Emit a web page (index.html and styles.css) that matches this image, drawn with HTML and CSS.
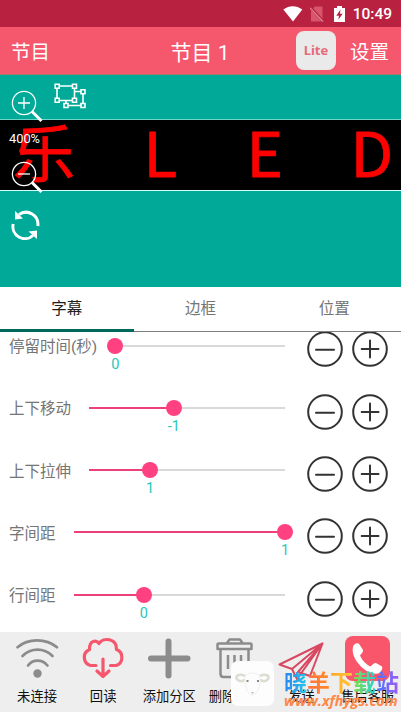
FILE: index.html
```html
<!DOCTYPE html>
<html lang="zh-CN">
<head>
<meta charset="utf-8">
<meta name="viewport" content="width=device-width">
<title>节目 1</title>
<link rel="stylesheet" href="styles.css">
</head>
<body>
<svg class="defs" width="0" height="0">
  <symbol id="minus" viewBox="0 0 36 36"><circle cx="18" cy="18" r="16.8"/><path d="M9 18.8H27"/></symbol>
  <symbol id="plus" viewBox="0 0 36 36"><circle cx="18" cy="18" r="16.8"/><path d="M9.700 18H26.500M18 9.600V26.400"/></symbol>
</svg>
<div class="app">
  <div class="status">
    <svg width="20" height="16" viewBox="0 0 20 16"><path fill="#fff" d="M0.300 3.500C6-1 13.500-1 19.300 3.500L10 15.500Z"/></svg>
    <svg class="sim" width="14" height="16" viewBox="0 0 14 16"><path fill="#d8566b" d="M5 .5H12.500V15.500H1V4.500Z"/><path stroke="#b92141" stroke-width="2.600" d="M0 1L14 16"/><path stroke="#df8492" stroke-width="1.200" d="M0 2L13 15.500"/></svg>
    <svg class="batt" width="11" height="16" viewBox="0 0 11 16"><path fill="#fff" d="M0 2H3V0H8V2H11V16H0Z"/><path fill="#b92141" d="M6.500 3.500L2.300 9.700H5L4.300 13.800L8.700 7.700H6Z"/></svg>
    <span>10:49</span>
  </div>
  <header class="bar">
    <span class="back">节目</span>
    <h1>节目 1</h1>
    <span class="lite">Lite</span>
    <span class="settings">设置</span>
  </header>
  <section class="canvas">
    <div class="led"><span>乐</span><span>L</span><span>E</span><span>D</span></div>
    <div class="tools">
      <svg class="mag" width="32" height="34" viewBox="0 0 32 34"><circle cx="13" cy="13" r="11.600"/><path d="M7 13H19M13 7V19"/><path class="handle" d="M21 21.500L30.500 31"/></svg>
      <span class="pct">400%</span>
      <svg class="mag out" width="32" height="34" viewBox="0 0 32 34"><circle cx="13" cy="13" r="11.600"/><path d="M7 13H19"/><path class="handle" d="M21 21.500L30.500 31"/></svg>
      <svg class="sync" width="30" height="30" viewBox="0 0 30 30"><path d="M8 4.500A12 12 0 0 1 26.800 16M22 25.500A12 12 0 0 1 2.200 14"/><path class="tip" d="M4 1L4 9.500L12 8.500ZM26 29L26 20.500L17.500 21.500Z"/></svg>
    </div>
    <svg class="group" width="34" height="28" viewBox="0 0 34 28"><path d="M3 3H20.500V17.500H3ZM20.500 8.500H29V22.500H12V17.500"/><path class="knob" d="M1.200 1.200h4v4h-4zM18.500 1.200h4v4h-4zM1.200 15.200h4v4h-4zM18.500 15.200h4v4h-4zM27 6.700h4v4h-4zM27 20.500h4v4h-4zM10 20.500h4v4h-4z"/></svg>
  </section>
  <nav class="tabs"><span class="on">字幕</span><span>边框</span><span>位置</span></nav>
  <main class="rows">
    <div class="row"><label>停留时间(秒)</label><div class="slider"><i class="fill" style="width:0%"></i><i class="thumb" style="left:0%"></i><b style="left:0%">0</b></div><svg><use href="#minus"/></svg><svg><use href="#plus"/></svg></div>
    <div class="row"><label>上下移动</label><div class="slider"><i class="fill" style="width:43.300%"></i><i class="thumb" style="left:43.300%"></i><b style="left:43.300%">-1</b></div><svg><use href="#minus"/></svg><svg><use href="#plus"/></svg></div>
    <div class="row"><label>上下拉伸</label><div class="slider"><i class="fill" style="width:31.100%"></i><i class="thumb" style="left:31.100%"></i><b style="left:31.100%">1</b></div><svg><use href="#minus"/></svg><svg><use href="#plus"/></svg></div>
    <div class="row"><label>字间距</label><div class="slider"><i class="fill" style="width:100%"></i><i class="thumb" style="left:100%"></i><b style="left:100%">1</b></div><svg><use href="#minus"/></svg><svg><use href="#plus"/></svg></div>
    <div class="row"><label>行间距</label><div class="slider"><i class="fill" style="width:33.300%"></i><i class="thumb" style="left:33.300%"></i><b style="left:33.300%">0</b></div><svg><use href="#minus"/></svg><svg><use href="#plus"/></svg></div>
  </main>
  <footer class="dock">
    <div class="item"><svg width="46" height="46" viewBox="0 0 46 46" fill="none" stroke="#8c8c8c" stroke-width="2.700" stroke-linecap="round"><path d="M3.500 12.200C14 3 32 3 43 12.200M8.500 21C17 12.500 30 12.500 38.500 21M14 30.500C19 24 28 24 33.500 30.500"/><circle cx="23.500" cy="38.500" r="4.200" fill="#8c8c8c" stroke="none"/></svg><span>未连接</span></div>
    <div class="item"><svg width="46" height="46" viewBox="0 0 46 46" fill="none" stroke="#f5576c" stroke-width="3.200" stroke-linecap="round" stroke-linejoin="round"><path d="M16 30.500H10.500A8.500 8.500 0 0 1 9.500 14.500C9 5 17 4.500 19 8.500C23 2 37 3 36.500 14.500A8.500 8.500 0 0 1 36 30.500H30.500M23 24V41M17 36L23 41.500L29 36"/></svg><span>回读</span></div>
    <div class="item"><svg width="46" height="46" viewBox="0 0 46 46" fill="none" stroke="#8c8c8c" stroke-width="6" stroke-linecap="round"><path d="M5 23.500H41.500M22.500 6.500V40.500"/></svg><span>添加分区</span></div>
    <div class="item"><svg width="46" height="46" viewBox="0 0 46 46" fill="none" stroke="#8c8c8c" stroke-width="2.500" stroke-linejoin="round"><path d="M5.500 14V9.500Q5.500 8.500 7 8.500H38Q39.500 8.500 39.500 9.500V14ZM15 8L17.500 4.500H28L30.500 8M8.500 14V39Q8.500 42 11.500 42H33.500Q36.500 42 36.500 39V14M16 20V34M22.500 20V37M29 20V34"/></svg><span>删除分区</span></div>
    <div class="item"><svg width="46" height="46" viewBox="0 0 46 46" fill="none" stroke="#d94860" stroke-width="2" stroke-linejoin="round"><path d="M44.500 8.500L1.500 29.500L14 34L44.500 8.500L32 41L20 37ZM14 34L19 44L44.500 8.500"/></svg><span>发送</span></div>
    <div class="item"><svg width="46" height="46" viewBox="0 0 46 46"><rect x="0" y="1" width="45" height="45" rx="8" fill="#f9566b"/><path fill="#fff" d="M8 12C9 8 13 7.500 14.500 9.500L18 15C18.500 17 16 19 15 20.500C17 25 21 29.500 25.500 31.500C27 30.500 28.500 27.500 31 28L37 31.500C38 33 36 38 33 38.500C22 41 5 24 8 12Z"/></svg><span>售后客服</span></div>
  </footer>
  <div class="goat"><svg width="43" height="45" viewBox="0 0 43 45" fill="none"><path stroke="#dcdcd0" stroke-width="2.600" d="M14 15C8 12 4 15 6 18C8 21 13 21 13 18M29 15C35 12 39 15 37 18C35 21 30 21 30 18"/><path stroke="#efefec" d="M14 15C18 11 25 11 29 15C30 24 27 33 21.500 34C16 33 13 24 14 15Z"/><path fill="#888" d="M15.500 19h2v2h-2zM26 19h2v2h-2z"/><path fill="#bbb" d="M20 31h3l-1.500 2z"/></svg></div>
  <div class="mark"><div class="name"><span>晓</span><span>羊</span><span>下</span><span>载</span><span>站</span></div><div class="url">www.xfhygs.com</div></div>
</div>
</body>
</html>
```
FILE: styles.css
```css
* { box-sizing: border-box; }
body { margin: 0; font-family: Roboto, "Noto Sans CJK SC", sans-serif; }
.defs { position: absolute; }
.app { position: relative; width: 401px; height: 712px; overflow: hidden; background: #fff; display: flex; flex-direction: column; }
.status { height: 27px; background: #b92141; color: #fff; display: flex; align-items: center; justify-content: flex-end; padding: 1px 9px 0 0; font-size: 15.500px; font-weight: 500; }
.status svg { margin-right: 7px; }
.status .batt { margin: 0 8px 0 3px; }
.status .sim { margin-right: 7px; }
.bar { height: 48px; background: #f5576c; color: #fff; display: grid; grid-template-columns: 100px 1fr 40px 65px; align-items: center; font-size: 19.500px; border-bottom: 1px solid #a9786f; }
.back { padding-left: 11px; }
.bar h1 { margin: 0; font-size: 21px; font-weight: 400; text-align: center; padding-left: 4px; }
.lite { width: 40px; height: 39px; border-radius: 8px; background: #eaeaea; color: #e56b7c; font: 700 13px/38px "Noto Sans", sans-serif; text-align: center; }
.settings { padding-left: 14px; white-space: nowrap; }
.canvas { position: relative; height: 212px; background: #00a998; padding-top: 44px; }
.led { height: 72px; background: #000; border-top: 1px solid #6ed5ca; border-bottom: 1px solid #d5fffa; display: grid; grid-template-columns: 143.500px 103px 104px 50px; font: 400 62px/64px "Noto Sans CJK SC", sans-serif; color: #f00; -webkit-text-stroke: 0.800px #f00; }
.led span { margin-top: -2px; }
.led span:first-child { padding-left: 13px; }
.tools { position: absolute; left: 10px; top: 15px; display: flex; flex-direction: column; width: 40px; }
.mag { fill: none; stroke: #fff; stroke-width: 1.300; margin-left: 1px; }
.mag .handle { stroke-width: 3; }
.pct { color: #fff; font-size: 12.800px; line-height: 16px; margin: 7px 0 14px -1px; }
.sync { margin: 15px 0 0 1px; fill: none; stroke: #fff; stroke-width: 3; }
.sync .tip { fill: #fff; stroke: none; }
.group { position: absolute; left: 54px; top: 8px; fill: none; stroke: #fff; stroke-width: 1.600; }
.knob { fill: #00a998; }
.tabs { height: 45px; display: grid; grid-template-columns: 1fr 1fr 1fr; border-bottom: 1px solid #808080; font-size: 15.500px; color: #757575; text-align: center; line-height: 45px; }
.tabs .on { color: #212121; height: 45px; border-bottom: 3px solid #00695c; }
.rows { height: 300px; overflow: hidden; }
.row { height: 62.300px; display: flex; align-items: flex-start; padding: 0 13px 0 9px; }
.row label { color: #757575; font-size: 15.500px; line-height: 22px; margin-top: 4px; white-space: nowrap; }
.slider { position: relative; flex: 1; height: 2px; margin: 12.500px 22px 0 18px; background: #d9d9d9; }
.fill { display: block; height: 2px; background: #ec407a; }
.thumb { position: absolute; top: -7px; width: 16px; height: 16px; margin-left: -8px; border-radius: 50%; background: #ff4081; }
.slider b { position: absolute; top: 11px; width: 30px; margin-left: -15px; text-align: center; font-weight: 400; font-size: 14.500px; line-height: 17px; color: #26c6bc; }
.row svg { width: 36px; height: 36px; margin-top: -0.700px; flex: none; fill: none; stroke: #333; stroke-width: 2; stroke-linecap: round; }
.row svg + svg { margin-left: 9px; }
.dock { height: 80px; background: #eee; display: grid; grid-template-columns: repeat(6, 66.100px); padding-left: 4px; }
.item { display: flex; flex-direction: column; align-items: center; padding-top: 3px; font-size: 13.300px; line-height: 20px; color: #111; white-space: nowrap; }
.item span { margin-top: 6px; }
.goat { position: absolute; left: 231px; top: 661px; width: 43px; height: 45px; border-radius: 7px; background: #fdfdfd; }
.mark { position: absolute; left: 284px; top: 668px; white-space: nowrap; }
.name { font: 700 23px/26px "Noto Sans CJK SC", sans-serif; display: flex; }
.name span { background: linear-gradient(90deg, #2784ef, #28c7e6); background-clip: text; -webkit-background-clip: text; color: transparent; }
.name span:nth-child(2) { background-image: linear-gradient(90deg, #ff7045, #ff8b25); }
.name span:nth-child(3) { background-image: linear-gradient(90deg, #ffa51f, #ffc93c); }
.name span:nth-child(4) { background-image: linear-gradient(90deg, #84dd42, #22d2d8); }
.name span:nth-child(5) { background-image: linear-gradient(90deg, #4875ff, #a15cf5); }
.url { font: italic 700 14.300px/14px "Open Sans", sans-serif; color: #ff8748; }
```
